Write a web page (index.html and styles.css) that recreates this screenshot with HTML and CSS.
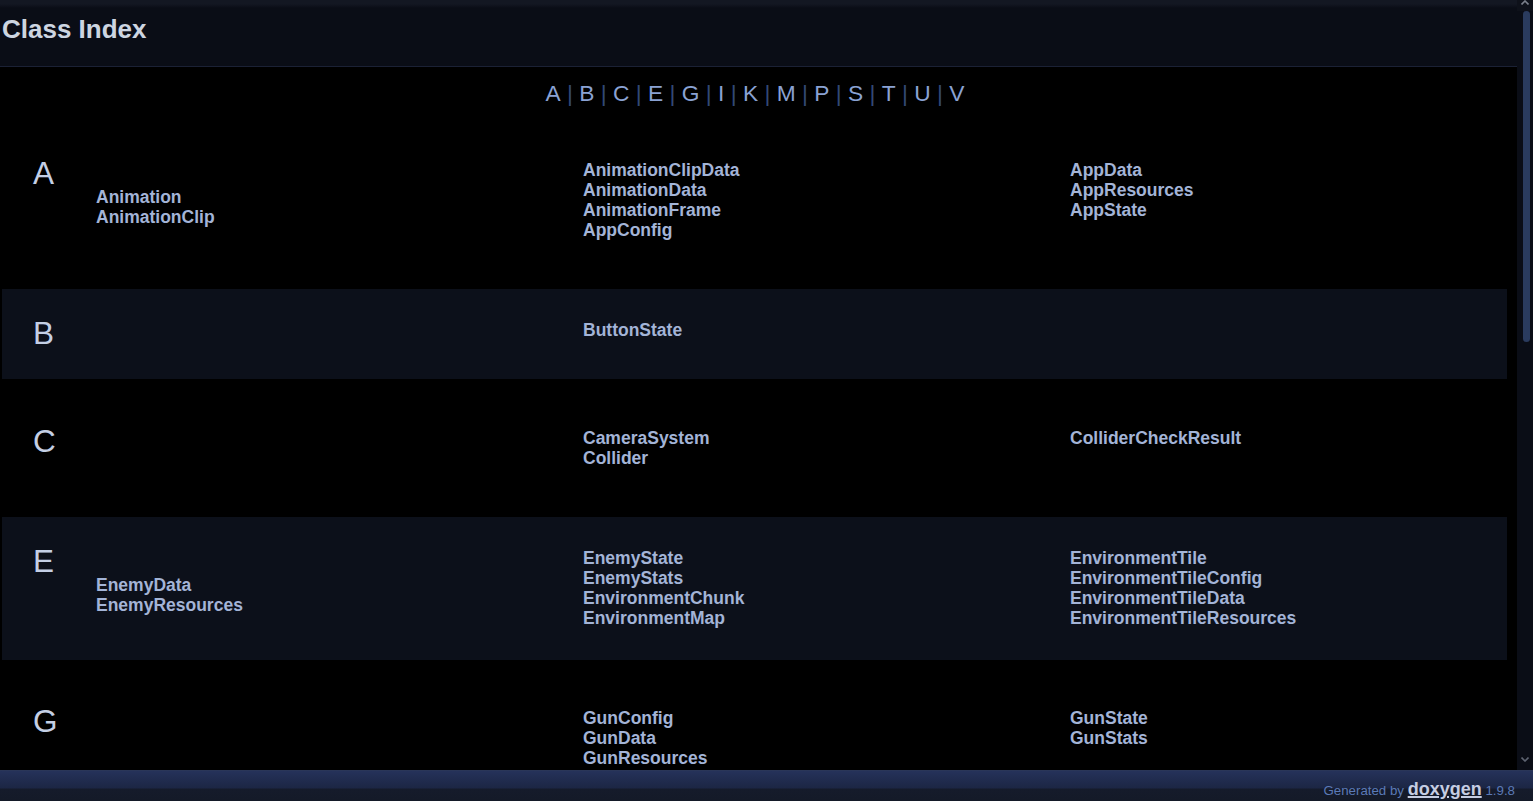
FILE: index.html
```html
<!DOCTYPE html>
<html lang="en">
<head>
<meta charset="utf-8">
<title>Class Index</title>
<link rel="stylesheet" href="styles.css">
</head>
<body>
<div class="app">
  <div class="main">
    <div class="doc">
      <div class="header">
        <div class="title">Class Index</div>
      </div>
      <div class="contents">
        <div class="qindex"><a class="qlink" href="#letter_A">A</a>&#160;|&#160;<a class="qlink" href="#letter_B">B</a>&#160;|&#160;<a class="qlink" href="#letter_C">C</a>&#160;|&#160;<a class="qlink" href="#letter_E">E</a>&#160;|&#160;<a class="qlink" href="#letter_G">G</a>&#160;|&#160;<a class="qlink" href="#letter_I">I</a>&#160;|&#160;<a class="qlink" href="#letter_K">K</a>&#160;|&#160;<a class="qlink" href="#letter_M">M</a>&#160;|&#160;<a class="qlink" href="#letter_P">P</a>&#160;|&#160;<a class="qlink" href="#letter_S">S</a>&#160;|&#160;<a class="qlink" href="#letter_T">T</a>&#160;|&#160;<a class="qlink" href="#letter_U">U</a>&#160;|&#160;<a class="qlink" href="#letter_V">V</a></div>

        <div class="classindex">
          <div class="band even" id="letter_A">
            <div class="col first">
              <div class="alphachar">A</div>
              <a class="el" href="#">Animation</a>
              <a class="el" href="#">AnimationClip</a>
            </div>
            <div class="col">
              <a class="el" href="#">AnimationClipData</a>
              <a class="el" href="#">AnimationData</a>
              <a class="el" href="#">AnimationFrame</a>
              <a class="el" href="#">AppConfig</a>
            </div>
            <div class="col">
              <a class="el" href="#">AppData</a>
              <a class="el" href="#">AppResources</a>
              <a class="el" href="#">AppState</a>
            </div>
          </div>

          <div class="band odd wide-gap" id="letter_B">
            <div class="col first">
              <div class="alphachar">B</div>
            </div>
            <div class="col">
              <a class="el" href="#">ButtonState</a>
            </div>
            <div class="col"></div>
          </div>

          <div class="band even" id="letter_C">
            <div class="col first">
              <div class="alphachar">C</div>
            </div>
            <div class="col">
              <a class="el" href="#">CameraSystem</a>
              <a class="el" href="#">Collider</a>
            </div>
            <div class="col">
              <a class="el" href="#">ColliderCheckResult</a>
            </div>
          </div>

          <div class="band odd" id="letter_E">
            <div class="col first">
              <div class="alphachar">E</div>
              <a class="el" href="#">EnemyData</a>
              <a class="el" href="#">EnemyResources</a>
            </div>
            <div class="col">
              <a class="el" href="#">EnemyState</a>
              <a class="el" href="#">EnemyStats</a>
              <a class="el" href="#">EnvironmentChunk</a>
              <a class="el" href="#">EnvironmentMap</a>
            </div>
            <div class="col">
              <a class="el" href="#">EnvironmentTile</a>
              <a class="el" href="#">EnvironmentTileConfig</a>
              <a class="el" href="#">EnvironmentTileData</a>
              <a class="el" href="#">EnvironmentTileResources</a>
            </div>
          </div>

          <div class="band even" id="letter_G">
            <div class="col first">
              <div class="alphachar">G</div>
            </div>
            <div class="col">
              <a class="el" href="#">GunConfig</a>
              <a class="el" href="#">GunData</a>
              <a class="el" href="#">GunResources</a>
            </div>
            <div class="col">
              <a class="el" href="#">GunState</a>
              <a class="el" href="#">GunStats</a>
            </div>
          </div>
        </div>
      </div>
    </div>
    <div class="scrollbar">
      <div class="sb-arrow sb-up">
        <svg width="8" height="5" viewBox="0 0 8 5"><path d="M0.5 4.5 L4 1 L7.5 4.5" fill="none" stroke="#7b808c" stroke-width="1.6"/></svg>
      </div>
      <div class="sb-thumb"></div>
      <div class="sb-track"></div>
      <div class="sb-arrow sb-down">
        <svg width="8" height="5" viewBox="0 0 8 5"><path d="M0.5 0.5 L4 4 L7.5 0.5" fill="none" stroke="#5d6370" stroke-width="1.6"/></svg>
      </div>
    </div>
  </div>
  <div class="footer">
    <div class="footer-line">Generated by <a class="doxy" href="#">doxygen</a> 1.9.8</div>
  </div>
</div>
</body>
</html>
```
FILE: styles.css
```css
html, body {
  margin: 0;
  padding: 0;
  background: #000;
  height: 801px;
  overflow: hidden;
}

body {
  font-family: "Liberation Sans", Arial, sans-serif;
  color: #c9d1d9;
}

.app {
  display: flex;
  flex-direction: column;
  height: 801px;
}

.main {
  display: flex;
  flex: 1;
  min-height: 0;
}

.doc {
  flex: 1;
  min-width: 0;
  overflow: hidden;
  background: #000;
}

/* header */
.header {
  background: linear-gradient(#131722 0, #131722 4px, #0a0d16 8px, #0a0d16 100%);
  border-bottom: 1px solid #1b2135;
  padding: 12px 0 19px 2px;
}

.title {
  font-size: 26px;
  font-weight: bold;
  line-height: 35px;
  color: #cdd5e1;
}

/* letter index */
.qindex {
  margin-top: 10px;
  padding-right: 7px;
  text-align: center;
  font-size: 22.75px;
  line-height: 32px;
  color: #334975;
}

.qlink {
  color: #8aa2d3;
  text-decoration: none;
}

/* class index bands */
.classindex {
  padding-top: 20px;
}

.band {
  display: grid;
  grid-template-columns: 487px 487px 1fr;
  margin: 0 10px 17px 2px;
  padding: 25px 0 25px 44px;
}

.band.wide-gap {
  margin-bottom: 18px;
}

.band.odd {
  background: #0c101a;
}

.band.even {
  background: #000;
}

.col {
  display: flex;
  flex-direction: column;
  align-items: flex-start;
  padding: 6px 0 7px;
}

.col.first {
  padding-top: 0;
}

.alphachar {
  height: 33px;
  line-height: 38px;
  font-size: 31.5px;
  margin-left: -13px;
  color: #c4cfe5;
}

a.el {
  display: block;
  margin-left: 50px;
  font-size: 17.5px;
  line-height: 20px;
  font-weight: bold;
  color: #a3b4d7;
  text-decoration: none;
  white-space: nowrap;
}

/* scrollbar column */
.scrollbar {
  width: 16px;
  flex: none;
  background: #0a0d16;
  display: flex;
  flex-direction: column;
  align-items: flex-start;
}

.sb-arrow {
  width: 16px;
  display: flex;
  justify-content: center;
}

.sb-up {
  height: 11px;
  align-items: flex-start;
  background: #0e111a;
}

.sb-thumb {
  margin-left: 6px;
  width: 7px;
  height: 331px;
  border-radius: 4px;
  background: #2a3b5e;
}

.sb-track {
  flex: 1;
}

.sb-down {
  height: 13px;
  align-items: flex-start;
}

/* footer */
.footer {
  flex: none;
  height: 30px;
  overflow: hidden;
  border-top: 1px solid #2a3658;
  background: linear-gradient(#25325a 0, #1c2644 17px, #151b2b 18px, #141a28 100%);
}

.footer-line {
  text-align: right;
  padding-right: 18px;
  font-size: 13.3px;
  line-height: 36px;
  color: #5b7ab7;
}

.doxy {
  font-size: 18px;
  font-weight: bold;
  color: #c5cde2;
  text-decoration: underline;
  text-decoration-thickness: 1.5px;
}
```
